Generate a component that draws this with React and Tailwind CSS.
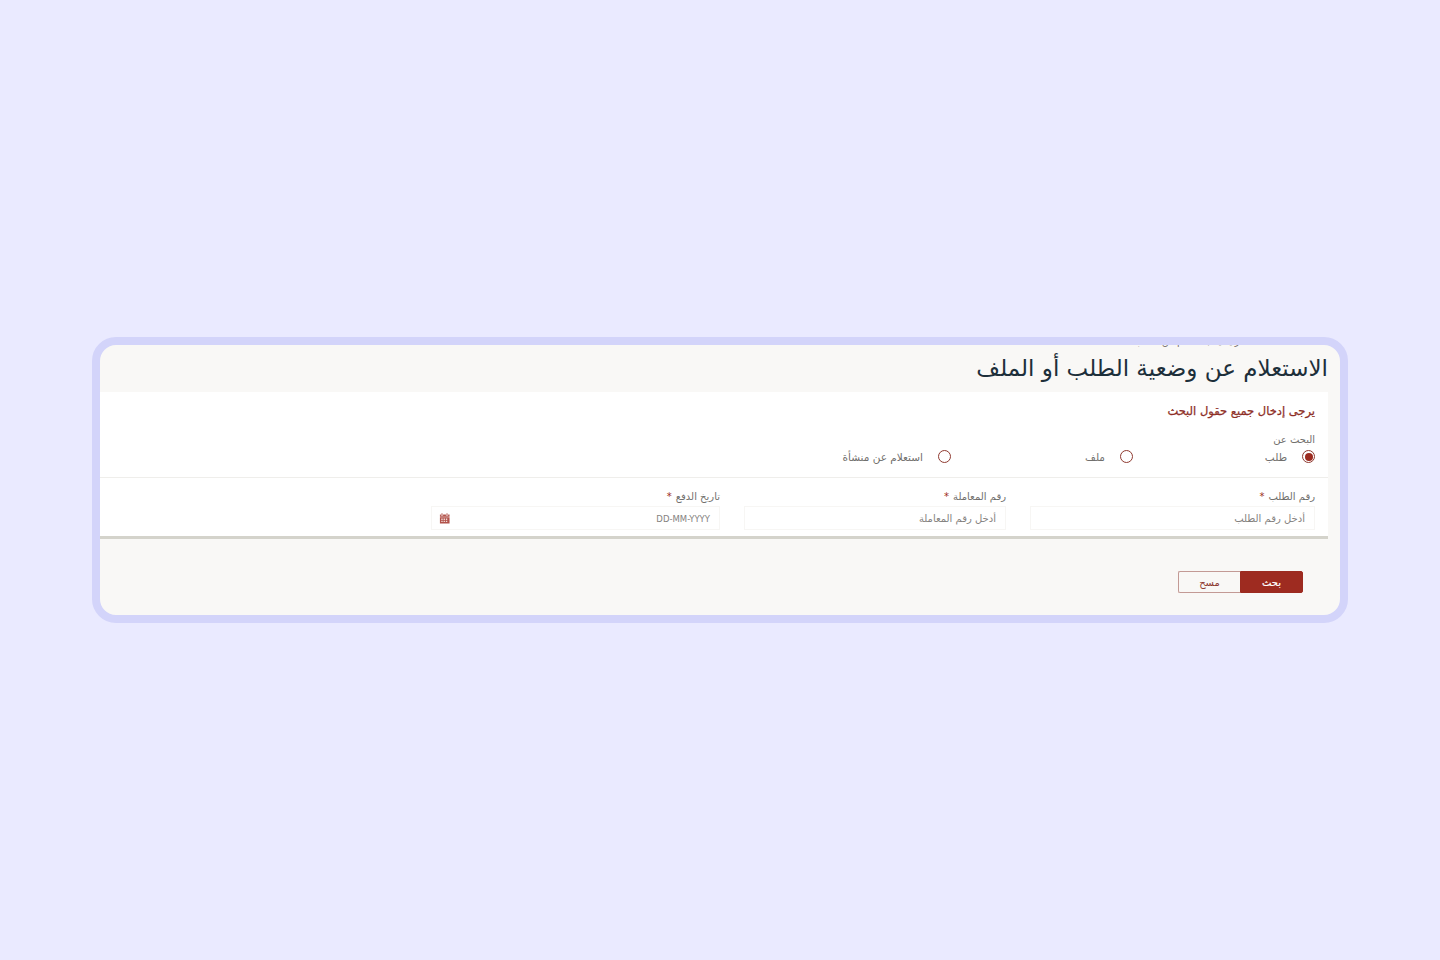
const searchTypes = [
  { label: 'طلب', checked: true },
  { label: 'ملف', checked: false },
  { label: 'استعلام عن منشأة', checked: false }
];

function CalendarIcon() {
  return (
    <svg viewBox="0 0 12 12" className="h-[11px] w-[11px]" fill="#b2524a">
      <path d="M2.5 0.5h1.5v1.5h-1.5zM8 0.5h1.5v1.5h-1.5zM1 1.5h1v1.2h2.5v-1.2h3v1.2h2.5v-1.2h1.5v2.5h-10.5zM1 4.6h10.5v6.9h-10.5z" />
      <path d="M2.5 6h1.5v1.5h-1.5zM5 6h1.5v1.5h-1.5zM7.5 6h1.5v1.5h-1.5zM2.5 8.4h1.5v1.5h-1.5zM5 8.4h1.5v1.5h-1.5zM7.5 8.4h1.5v1.5h-1.5z" fill="#f1dcd9" />
    </svg>
  );
}

function RadioOption({ label, checked }) {
  return (
    <div className="flex w-[182px] items-center gap-[15px]">
      <span className="flex h-[13px] w-[13px] items-center justify-center rounded-full border border-[#8f3a30] bg-white">
        {checked && <span className="h-[8px] w-[8px] rounded-full bg-[#9c2b20]" />}
      </span>
      <span className="text-[10.5px] leading-4 text-[#716f6d]">{label}</span>
    </div>
  );
}

function Field({ label, placeholder, width, icon, small }) {
  return (
    <div className={width}>
      <div className="flex h-[16px] items-center gap-1 text-[10px] text-[#716f6d]">
        <span>{label}</span>
        <span className="text-[#9c2b20]">*</span>
      </div>
      <div className="mt-[2px] flex h-[24px] items-center justify-between border border-[#f7f6f4] pr-[9px] pl-[7px] text-[#858280]">
        <span className={small ? 'pt-[2px] text-[8.5px]' : 'text-[10px]'}>{placeholder}</span>
        {icon}
      </div>
    </div>
  );
}

export default function App() {
  return (
    <div className="flex min-h-screen items-center justify-center bg-[#eaeaff] font-['DejaVu_Sans',sans-serif]" dir="rtl">
      <div className="h-[286px] w-[1256px] overflow-hidden rounded-[24px] border-[8px] border-[#d3d4fa] bg-[#f9f8f6]">
        <div className="h-full overflow-hidden rounded-[16px] pr-[12px]">
          <div className="h-[3px] overflow-hidden pr-[83px]">
            <div className="-mt-[9px] text-[9px] leading-[12px] text-[#77706c]">الرئيسية / استعلام عن الطلب</div>
          </div>
          <h1 className="h-[44px] text-[23px] leading-[40px] text-[#1d2f3a]">الاستعلام عن وضعية الطلب أو الملف</h1>
          <div className="h-[147px] border-b-[3px] border-[#d4d3cb] bg-white pr-[13px]">
            <h2 className="pt-[10px] text-[11.5px] leading-[18px] text-[#8d2e26] [-webkit-text-stroke:0.25px_#8d2e26]">يرجى إدخال جميع حقول البحث</h2>
            <div className="mt-[12px] text-[10px] leading-4 text-[#716f6d]">البحث عن</div>
            <div className="flex h-[17px] items-center">
              {searchTypes.map((type) => (
                <RadioOption key={type.label} {...type} />
              ))}
            </div>
            <div className="-mr-[13px] mt-[12px] border-t border-[#efeeeb]" />
            <div className="mt-[10px] flex gap-[24px]">
              <Field label="رقم الطلب" placeholder="أدخل رقم الطلب" width="w-[285px]" />
              <Field label="رقم المعاملة" placeholder="أدخل رقم المعاملة" width="w-[262px]" />
              <Field label="تاريخ الدفع" placeholder="DD-MM-YYYY" width="w-[289px]" small icon={<CalendarIcon />} />
            </div>
          </div>
          <div className="mt-[32px] flex pr-[25px]">
            <button className="h-[22px] w-[63px] rounded-r-[2px] border border-[#9c2b20] bg-[#9e2b20] text-[10px] text-white [-webkit-text-stroke:0.2px_#ffffff]">بحث</button>
            <button className="h-[22px] w-[62px] rounded-l-[2px] border border-r-0 border-[#c39a95] bg-[#f9f8f6] text-[10px] text-[#8d3a32]">مسح</button>
          </div>
        </div>
      </div>
    </div>
  );
}
